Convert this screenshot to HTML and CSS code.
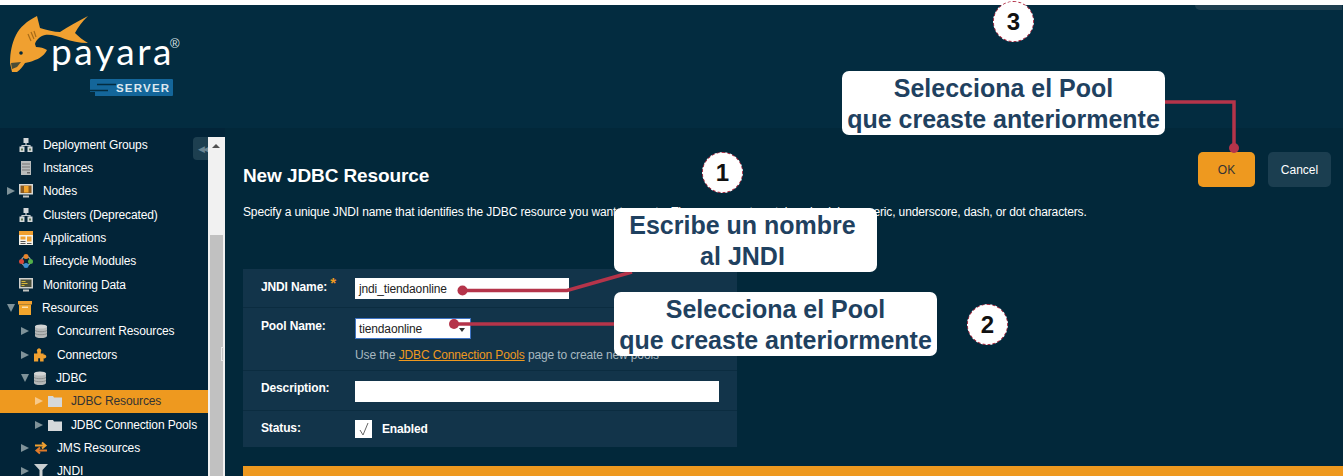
FILE: index.html
```html
<!DOCTYPE html>
<html lang="en">
  <head>
    <meta charset="UTF-8" />
    <meta name="viewport" content="width=device-width, initial-scale=1.0" />
    <title>New JDBC Resource</title>
    <link rel="stylesheet" href="styles.css">
  </head>
  <body>
    <svg class="defs" width="0" height="0">
      <symbol id="i-tree" viewBox="0 0 14 14">
        <rect x="4.500" y="0" width="5" height="5" fill="#d4d8da"/>
        <path d="M7 5v2.500M3 10V7.500h8V10" stroke="#c9ced0" stroke-width="1.200" fill="none"/>
        <rect x="0.500" y="8.500" width="5" height="5.500" fill="#d4d8da"/>
        <rect x="8.500" y="8.500" width="5" height="5.500" fill="#d4d8da"/>
        <rect x="2" y="10.500" width="2" height="2" fill="#5f7a55"/>
        <rect x="10" y="10.500" width="2" height="2" fill="#5f7a55"/>
      </symbol>
      <symbol id="i-server" viewBox="0 0 14 14">
        <rect x="2" y="0" width="10" height="14" fill="#b9bcbc"/>
        <path d="M3 3h8M3 6h8M3 9h8" stroke="#777" stroke-width="1"/>
        <rect x="8" y="11" width="3" height="1.500" fill="#666"/>
      </symbol>
      <symbol id="i-node" viewBox="0 0 14 14">
        <rect x="0" y="0" width="14" height="10.500" fill="#d8d8d4"/>
        <rect x="1.500" y="1.500" width="11" height="7.500" fill="#8a5a20"/>
        <rect x="5" y="2" width="4.500" height="6.500" fill="#f2a52c"/>
        <path d="M4 12.500h6" stroke="#c4c4c0" stroke-width="2"/>
      </symbol>
      <symbol id="i-apps" viewBox="0 0 14 14">
        <rect x="0" y="0" width="14" height="14" fill="#f4f2ea"/>
        <rect x="0" y="0" width="14" height="4" fill="#f0a030"/>
        <rect x="1.500" y="5.500" width="5" height="3" fill="#f0a030"/>
        <rect x="8" y="5.500" width="4.500" height="5" fill="#f0a030"/>
        <path d="M1.500 10.500h5M1.500 12.500h5M8 12.500h4.500" stroke="#555" stroke-width="1"/>
      </symbol>
      <symbol id="i-cycle" viewBox="0 0 14 14">
        <circle cx="7" cy="7" r="4.500" fill="none" stroke="#8a98a0" stroke-width="1.500"/>
        <circle cx="7" cy="2.500" r="2.500" fill="#e8842a"/>
        <circle cx="2.500" cy="7.500" r="2.500" fill="#d8483a"/>
        <circle cx="11.500" cy="7.500" r="2.500" fill="#52b04a"/>
        <circle cx="7" cy="11.500" r="2.500" fill="#3a8fd0"/>
      </symbol>
      <symbol id="i-monitor" viewBox="0 0 14 14">
        <rect x="0" y="0" width="14" height="10.500" fill="#d0d0cc"/>
        <rect x="1.500" y="1.500" width="11" height="7.500" fill="#4a4f3a"/>
        <path d="M2.500 3.500h4M2.500 5.500h6M2.500 7.500h3" stroke="#d8b83a" stroke-width="1"/>
        <path d="M4 12.500h6" stroke="#c4c4c0" stroke-width="2"/>
      </symbol>
      <symbol id="i-box" viewBox="0 0 14 14">
        <rect x="0" y="0" width="14" height="3.500" fill="#f0a030"/>
        <rect x="1" y="3.500" width="12" height="10.500" fill="#f2a52c"/>
        <rect x="4" y="5.500" width="6" height="1.500" fill="#fbe0ae"/>
      </symbol>
      <symbol id="i-db" viewBox="0 0 14 14">
        <rect x="1" y="2" width="12" height="10" fill="#b5b8b8"/>
        <ellipse cx="7" cy="2.500" rx="6" ry="2" fill="#d2d4d4"/>
        <ellipse cx="7" cy="12" rx="6" ry="2" fill="#b5b8b8"/>
        <path d="M1 6.500c2 1.600 10 1.600 12 0M1 9.500c2 1.600 10 1.600 12 0" stroke="#8b8f8f" fill="none"/>
      </symbol>
      <symbol id="i-plug" viewBox="0 0 15 14">
        <path d="M0 14V5.500h3.500V3.500a2.300 2.300 0 1 1 3.800 0V5.500h3v1.300a2 2 0 1 1 0 3.600V14H6.500v-3.500h-2V14z" fill="#f0a030"/>
      </symbol>
      <symbol id="i-folder" viewBox="0 0 14 14">
        <path d="M0 2h5l1 1.500h8V13H0z" fill="#d5d8da"/>
      </symbol>
      <symbol id="i-jms" viewBox="0 0 14 14">
        <path d="M1 4.500h10M8 1.500l3.500 3-3.500 3" stroke="#f0a030" stroke-width="2" fill="none"/>
        <path d="M13 9.500H3M6 6.500l-3.500 3 3.500 3" stroke="#e07a2a" stroke-width="2" fill="none"/>
      </symbol>
      <symbol id="i-funnel" viewBox="0 0 14 14">
        <path d="M0 0h14L8.500 6v8h-3V6z" fill="#c9ced0"/>
      </symbol>
    </svg>

    <div class="page">
      <div class="top-strip"><div class="top-tab"></div></div>

      <header class="masthead">
        <div class="logo">
          <svg class="fish" width="100" height="75" viewBox="0 5 100 75">
            <path d="M10 63C10 52 12 43 16 35 20 27 27 21 37 16L40 28C47 30 54 32 60 32 68 27 78 21 88 16 82 22 78 27 75 33 79 37 83 40 88 43 79 43 71 41 65 39 58 36 50 34 45 35 40 36 36 40 35 44L36 47C40 47 44 48 47 50 45 54 41 58 35 60 31 62 28 62 25 63 23 66 20 70 17 72L12 72z" fill="#f0a030"/>
            <path d="M28 34l3 7M31 32l3 7M34 31l2 6" stroke="#a86c18" stroke-width="1.200"/>
            <circle cx="21" cy="53" r="1.800" fill="#03293c"/>
            <path d="M11 63l10-1-4 5-5 2z" fill="#03293c" opacity="0.7"/>
          </svg>
          <span class="wordmark">payara</span>
          <span class="reg">®</span>
          <div class="server-tag">
            <svg class="server-mark" width="26" height="17" viewBox="0 0 26 17">
              <path d="M7 5.500h19M0 11.500h18" stroke="#032c40" stroke-width="1.500"/>
              <path d="M0 13h5v4H0z" fill="#032c40"/>
            </svg>
            <span class="server-text">SERVER</span>
          </div>
        </div>
      </header>

      <div class="content">
        <nav class="sidebar">
          <div class="tree-row"><span class="arrow none"></span><svg class="icon"><use href="#i-tree"/></svg><span>Deployment Groups</span></div>
          <div class="tree-row"><span class="arrow none"></span><svg class="icon"><use href="#i-server"/></svg><span>Instances</span></div>
          <div class="tree-row"><span class="arrow"></span><svg class="icon"><use href="#i-node"/></svg><span>Nodes</span></div>
          <div class="tree-row"><span class="arrow none"></span><svg class="icon"><use href="#i-tree"/></svg><span>Clusters (Deprecated)</span></div>
          <div class="tree-row"><span class="arrow none"></span><svg class="icon"><use href="#i-apps"/></svg><span>Applications</span></div>
          <div class="tree-row"><span class="arrow none"></span><svg class="icon"><use href="#i-cycle"/></svg><span>Lifecycle Modules</span></div>
          <div class="tree-row"><span class="arrow none"></span><svg class="icon"><use href="#i-monitor"/></svg><span>Monitoring Data</span></div>
          <div class="tree-row"><span class="arrow open"></span><svg class="icon"><use href="#i-box"/></svg><span>Resources</span></div>
          <div class="tree-row level-1"><span class="arrow"></span><svg class="icon"><use href="#i-db"/></svg><span>Concurrent Resources</span></div>
          <div class="tree-row level-1"><span class="arrow"></span><svg class="icon"><use href="#i-plug"/></svg><span>Connectors</span></div>
          <div class="tree-row level-1"><span class="arrow open"></span><svg class="icon"><use href="#i-db"/></svg><span>JDBC</span></div>
          <div class="tree-row level-2 active"><span class="arrow"></span><svg class="icon"><use href="#i-folder"/></svg><span>JDBC Resources</span></div>
          <div class="tree-row level-2"><span class="arrow"></span><svg class="icon"><use href="#i-folder"/></svg><span>JDBC Connection Pools</span></div>
          <div class="tree-row level-1"><span class="arrow"></span><svg class="icon"><use href="#i-jms"/></svg><span>JMS Resources</span></div>
          <div class="tree-row level-1"><span class="arrow"></span><svg class="icon"><use href="#i-funnel"/></svg><span>JNDI</span></div>
          <div class="collapse-btn"><span>◀◀</span></div>
        </nav>

        <div class="scrollbar">
          <div class="scroll-track"><span class="scroll-up"></span></div>
          <div class="scroll-thumb"></div>
          <div class="resizer"></div>
        </div>

        <main class="main">
          <div class="title-row">
            <h1>New JDBC Resource</h1>
            <div class="actions">
              <button class="btn btn-ok" type="button">OK</button>
              <button class="btn btn-cancel" type="button">Cancel</button>
            </div>
          </div>
          <p class="intro">Specify a unique JNDI name that identifies the JDBC resource you want to create. The name must contain only alphanumeric, underscore, dash, or dot characters.</p>

          <div class="form-panel">
            <div class="form-row row-jndi">
              <label>JNDI Name: <span class="req">*</span></label>
              <div class="field"><div class="input input-jndi">jndi_tiendaonline</div></div>
            </div>
            <div class="form-row row-pool">
              <label>Pool Name:</label>
              <div class="field">
                <div class="input input-pool">tiendaonline<span class="caret"></span></div>
                <p class="help">Use the <a href="#">JDBC Connection Pools</a> page to create new pools</p>
              </div>
            </div>
            <div class="form-row row-desc">
              <label>Description:</label>
              <div class="field"><div class="input input-desc"></div></div>
            </div>
            <div class="form-row row-status">
              <label>Status:</label>
              <div class="field check-field">
                <span class="checkbox">
                  <svg width="17" height="18" viewBox="0 0 17 18"><path d="M5 10l3 5L13 3" stroke="#666" stroke-width="1" fill="none"/></svg>
                </span>
                <b>Enabled</b>
              </div>
            </div>
          </div>

          <div class="footer-bar"></div>
        </main>
      </div>

      <!-- annotations drawn over the screenshot -->
      <svg class="lines" width="1344" height="476" viewBox="0 0 1344 476">
        <path d="M462 290.500H567L632 272" />
        <circle cx="462.500" cy="290.500" r="5" />
        <path d="M454 324H614" />
        <circle cx="454" cy="324" r="5" />
        <path d="M1165 102H1234V148" />
        <circle cx="1234" cy="148" r="5" />
      </svg>

      <div class="note note-jndi">Escribe un nombre<br>al JNDI</div>
      <div class="note note-pool">Selecciona el Pool<br>que creaste anteriormente</div>
      <div class="note note-ok">Selecciona el Pool<br>que creaste anteriormente</div>

      <div class="step step-1">1</div>
      <div class="step step-2">2</div>
      <div class="step step-3">3</div>
    </div>
  </body>
</html>
```

FILE: styles.css
```css
* {
  margin: 0;
  padding: 0;
  box-sizing: border-box;
}

html,
body {
  height: 100%;
  overflow: hidden;
  background: #fff;
}

body {
  font-family: "Liberation Sans", Arial, sans-serif;
  font-size: 12px;
  letter-spacing: -0.13px;
  color: #fff;
}

.defs {
  position: absolute;
}

.page {
  position: relative;
  width: 1344px;
  height: 476px;
  padding-right: 1px;
  display: flex;
  flex-direction: column;
  overflow: hidden;
}

.top-strip {
  height: 5px;
  flex: none;
  background: #fff;
  position: relative;
}

.top-tab {
  position: absolute;
  right: 1px;
  top: 5px;
  width: 147px;
  height: 5px;
  background: #1f3f50;
  border-bottom-left-radius: 5px;
  z-index: 1;
}

/* header */
.masthead {
  height: 123px;
  flex: none;
  background: #032c40;
}

.logo {
  position: relative;
  width: 200px;
  height: 123px;
}

.fish {
  position: absolute;
  left: 0;
  top: 0;
}

.wordmark {
  position: absolute;
  left: 51px;
  top: 21px;
  font-family: Lato, sans-serif;
  font-size: 37px;
  font-weight: 400;
  line-height: 50px;
  letter-spacing: 2.600px;
}

.reg {
  position: absolute;
  left: 170px;
  top: 31px;
  font-size: 13px;
  line-height: 15px;
  color: #dfe5e8;
}

.server-tag {
  position: absolute;
  left: 90px;
  top: 74px;
  width: 83px;
  height: 17px;
  background: #14669a;
  display: flex;
  align-items: center;
  border-radius: 1px;
}

.server-mark {
  flex: none;
}

.server-text {
  font-size: 11.500px;
  font-weight: bold;
  letter-spacing: 1.200px;
  color: #dde8ef;
}

.content {
  flex: 1;
  display: flex;
  min-height: 0;
}

/* left tree */
.sidebar {
  position: relative;
  width: 208px;
  flex: none;
  padding-top: 5px;
  background: #022438;
  overflow: hidden;
}

.tree-row {
  height: 23.330px;
  display: flex;
  align-items: center;
  padding-left: 7px;
  white-space: nowrap;
}

.tree-row.level-1 {
  padding-left: 21px;
}

.tree-row.level-2 {
  padding-left: 35px;
}

.tree-row.active {
  background: #ee991f;
  color: #333;
}

.arrow {
  width: 0;
  height: 0;
  margin-right: 4px;
  border-style: solid;
  border-width: 4.500px 0 4.500px 8px;
  border-color: transparent transparent transparent #7f9299;
}

.level-1 .arrow,
.level-2 .arrow {
  margin-right: 5px;
}

.arrow.none {
  border-color: transparent;
}

.arrow.open {
  border-width: 8px 4.500px 0 4.500px;
  margin-right: 3px;
  border-color: #7f9299 transparent transparent transparent;
}

.level-1 .arrow.open {
  margin-right: 4px;
}

.active .arrow {
  border-left-color: #f7c98a;
}

.icon {
  width: 14px;
  height: 14px;
  margin-right: 10px;
  flex: none;
}

.level-1 .icon,
.level-2 .icon {
  margin-right: 9px;
}

.collapse-btn {
  position: absolute;
  top: 9px;
  right: 0;
  width: 15px;
  height: 23px;
  background: #1d3f50;
  border-radius: 4px 0 0 4px;
  display: flex;
  align-items: center;
  justify-content: flex-end;
  font-size: 9px;
  letter-spacing: -2px;
  color: #6d8794;
}

.scrollbar {
  position: relative;
  width: 17px;
  flex: none;
  padding-top: 9px;
  background: #022438;
  display: flex;
  flex-direction: column;
}

.scroll-track {
  height: 98px;
  background: #f1f1f1;
  position: relative;
}

.scroll-up {
  position: absolute;
  left: 4px;
  top: 7px;
  border-style: solid;
  border-width: 0 4px 4px 4px;
  border-color: transparent transparent #505050 transparent;
}

.scroll-thumb {
  flex: 1;
  background: #c1c1c1;
  border-left: 2px solid #f1f1f1;
  border-right: 2px solid #f1f1f1;
}

.resizer {
  position: absolute;
  left: 13px;
  top: 219px;
  width: 3px;
  height: 14px;
  border: 1px solid #e8e8e8;
}

/* main area */
.main {
  flex: 1;
  min-width: 0;
  padding-left: 18px;
  background: #02283a;
}

.title-row {
  display: flex;
  justify-content: space-between;
  align-items: flex-start;
  padding: 24px 12px 0 0;
}

h1 {
  margin-top: 13px;
  font-size: 19px;
  line-height: 21px;
  font-weight: bold;
  letter-spacing: -0.1px;
}

.actions {
  display: flex;
  gap: 13px;
}

.btn {
  height: 35px;
  border: none;
  border-radius: 5px;
  font-family: "Liberation Sans", Arial, sans-serif;
  font-size: 12px;
}

.btn-ok {
  width: 57px;
  background: #ee991f;
  color: #333;
}

.btn-cancel {
  width: 63px;
  background: #1b3e50;
  color: #fff;
}

.intro {
  margin-top: 18px;
  line-height: 14px;
  white-space: nowrap;
}

.form-panel {
  width: 494px;
  margin-top: 50px;
  background: #12344a;
}

.form-row {
  display: flex;
  border-bottom: 1px solid #0b2c40;
}

.form-row:last-child {
  border-bottom: none;
}

.form-row label {
  width: 112px;
  flex: none;
  padding-left: 18px;
  font-weight: bold;
}

.req {
  position: relative;
  top: -3px;
  color: #ee991f;
  font-size: 15px;
  line-height: 10px;
}

.row-jndi {
  height: 39px;
  padding-top: 9px;
}

.row-jndi label {
  padding-top: 2px;
}

.row-pool {
  height: 63px;
  padding-top: 10px;
}

.row-pool label {
  padding-top: 1px;
}

.row-desc {
  height: 40px;
  padding-top: 10px;
}

.row-status {
  height: 36px;
  padding-top: 9px;
}

.row-status label {
  padding-top: 1px;
}

.input {
  height: 21px;
  background: #fff;
  color: #222;
  line-height: 22px;
  padding-left: 4px;
}

.input-jndi {
  width: 214px;
}

.input-pool {
  position: relative;
  width: 116px;
  border: 1px solid #3f74c4;
  line-height: 21px;
  padding-left: 3px;
}

.caret {
  position: absolute;
  right: 5px;
  top: 9px;
  border-style: solid;
  border-width: 4px 3px 0 3px;
  border-color: #333 transparent transparent transparent;
}

.input-desc {
  width: 364px;
}

.help {
  margin-top: 9px;
  line-height: 14px;
  color: #a8b8c0;
}

.help a {
  color: #ee991f;
}

.check-field {
  display: flex;
  align-items: flex-start;
}

.checkbox {
  width: 17px;
  height: 18px;
  background: #fff;
  margin-right: 10px;
}

.check-field b {
  margin-top: 2px;
}

.footer-bar {
  height: 40px;
  margin-top: 19px;
  background: #ee991f;
}

/* annotations */
.lines {
  position: absolute;
  left: 0;
  top: 0;
}

.lines path {
  fill: none;
  stroke: #b5344a;
  stroke-width: 3.500;
}

.lines circle {
  fill: #b5344a;
}

.note {
  position: absolute;
  height: 64px;
  padding-top: 2px;
  background: #fff;
  border-radius: 7px;
  text-align: center;
  font-size: 25px;
  line-height: 31px;
  font-weight: bold;
  letter-spacing: 0;
  color: #1f4160;
  white-space: nowrap;
}

.note-jndi {
  left: 614px;
  top: 208px;
  width: 263px;
  padding-right: 6px;
}

.note-pool {
  left: 614px;
  top: 292px;
  width: 323px;
}

.note-ok {
  left: 842px;
  top: 71px;
  width: 323px;
}

.step {
  position: absolute;
  width: 41px;
  height: 41px;
  border: 1px dashed #b5344a;
  border-radius: 50%;
  background: #fff;
  color: #111;
  font-size: 24px;
  font-weight: bold;
  line-height: 39px;
  text-align: center;
  letter-spacing: 0;
}

.step-1 {
  left: 702px;
  top: 152px;
}

.step-2 {
  left: 967px;
  top: 304px;
}

.step-3 {
  left: 993px;
  top: 1px;
}
```
